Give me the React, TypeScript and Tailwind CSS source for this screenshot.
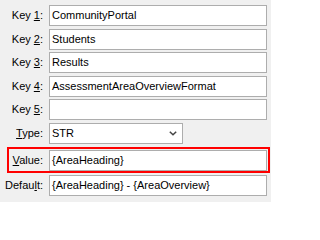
import type { ReactNode } from 'react'

const font = { fontFamily: '"Liberation Sans", Arial, sans-serif' }

function Label({ children }: { children: ReactNode }) {
  return (
    <div className="w-[44px] shrink-0 text-right pr-[1px] text-[11px] leading-none text-black whitespace-nowrap">
      {children}
    </div>
  )
}

function U({ children }: { children: ReactNode }) {
  return <span className="underline underline-offset-[1px] decoration-[1px]">{children}</span>
}

function TextBox({ value }: { value: string }) {
  return (
    <div className="ml-[5px] w-[218px] h-[21px] bg-white border border-[#adadad] flex items-center pl-[2px] text-[11px] text-black whitespace-nowrap overflow-hidden">
      {value}
    </div>
  )
}

function Row({ label, children }: { label: ReactNode; children: ReactNode }) {
  return (
    <div className="flex items-center">
      <Label>{label}</Label>
      {children}
    </div>
  )
}

export default function App() {
  const keys = [
    ['1', 'CommunityPortal'],
    ['2', 'Students'],
    ['3', 'Results'],
    ['4', 'AssessmentAreaOverviewFormat'],
    ['5', ''],
  ]

  return (
    <div className="w-[271px] h-[202px] bg-[#f0f0f0] pt-[5px] flex flex-col" style={font}>
      <div className="flex flex-col gap-[2.5px]">
        {keys.map(([n, v]) => (
          <Row
            key={n}
            label={
              <>
                Key <U>{n}</U>:
              </>
            }
          >
            <TextBox value={v} />
          </Row>
        ))}
      </div>

      <div className="mt-[3px]">
        <Row
          label={
            <>
              <U>T</U>ype:
            </>
          }
        >
          <div className="ml-[5px] w-[134px] h-[21px] bg-white border border-[#adadad] flex items-center justify-between pl-[2px] pr-[5px] text-[11px] text-black">
            <span>STR</span>
            <svg width="8" height="5" viewBox="0 0 8 5">
              <path d="M0.8 0.8 L4 3.8 L7.2 0.8" fill="none" stroke="#444" strokeWidth="1.5" />
            </svg>
          </div>
        </Row>
      </div>

      <div className="mt-[3px] ml-[7px] w-[263px] h-[26px] border-2 border-[#ff0000] flex items-center -translate-x-[0px]">
        <div className="w-[35px] shrink-0 text-right pr-[1px] text-[11px] leading-none text-black">
          <U>V</U>alue:
        </div>
        <div className="ml-[5px] w-[218px] h-[21px] bg-white border border-[#adadad] flex items-center pl-[2px] text-[11px] text-black whitespace-nowrap">
          {'{AreaHeading}'}
        </div>
      </div>

      <div className="mt-[2px]">
        <Row
          label={
            <>
              Defau<U>l</U>t:
            </>
          }
        >
          <TextBox value="{AreaHeading} - {AreaOverview}" />
        </Row>
      </div>
    </div>
  )
}
